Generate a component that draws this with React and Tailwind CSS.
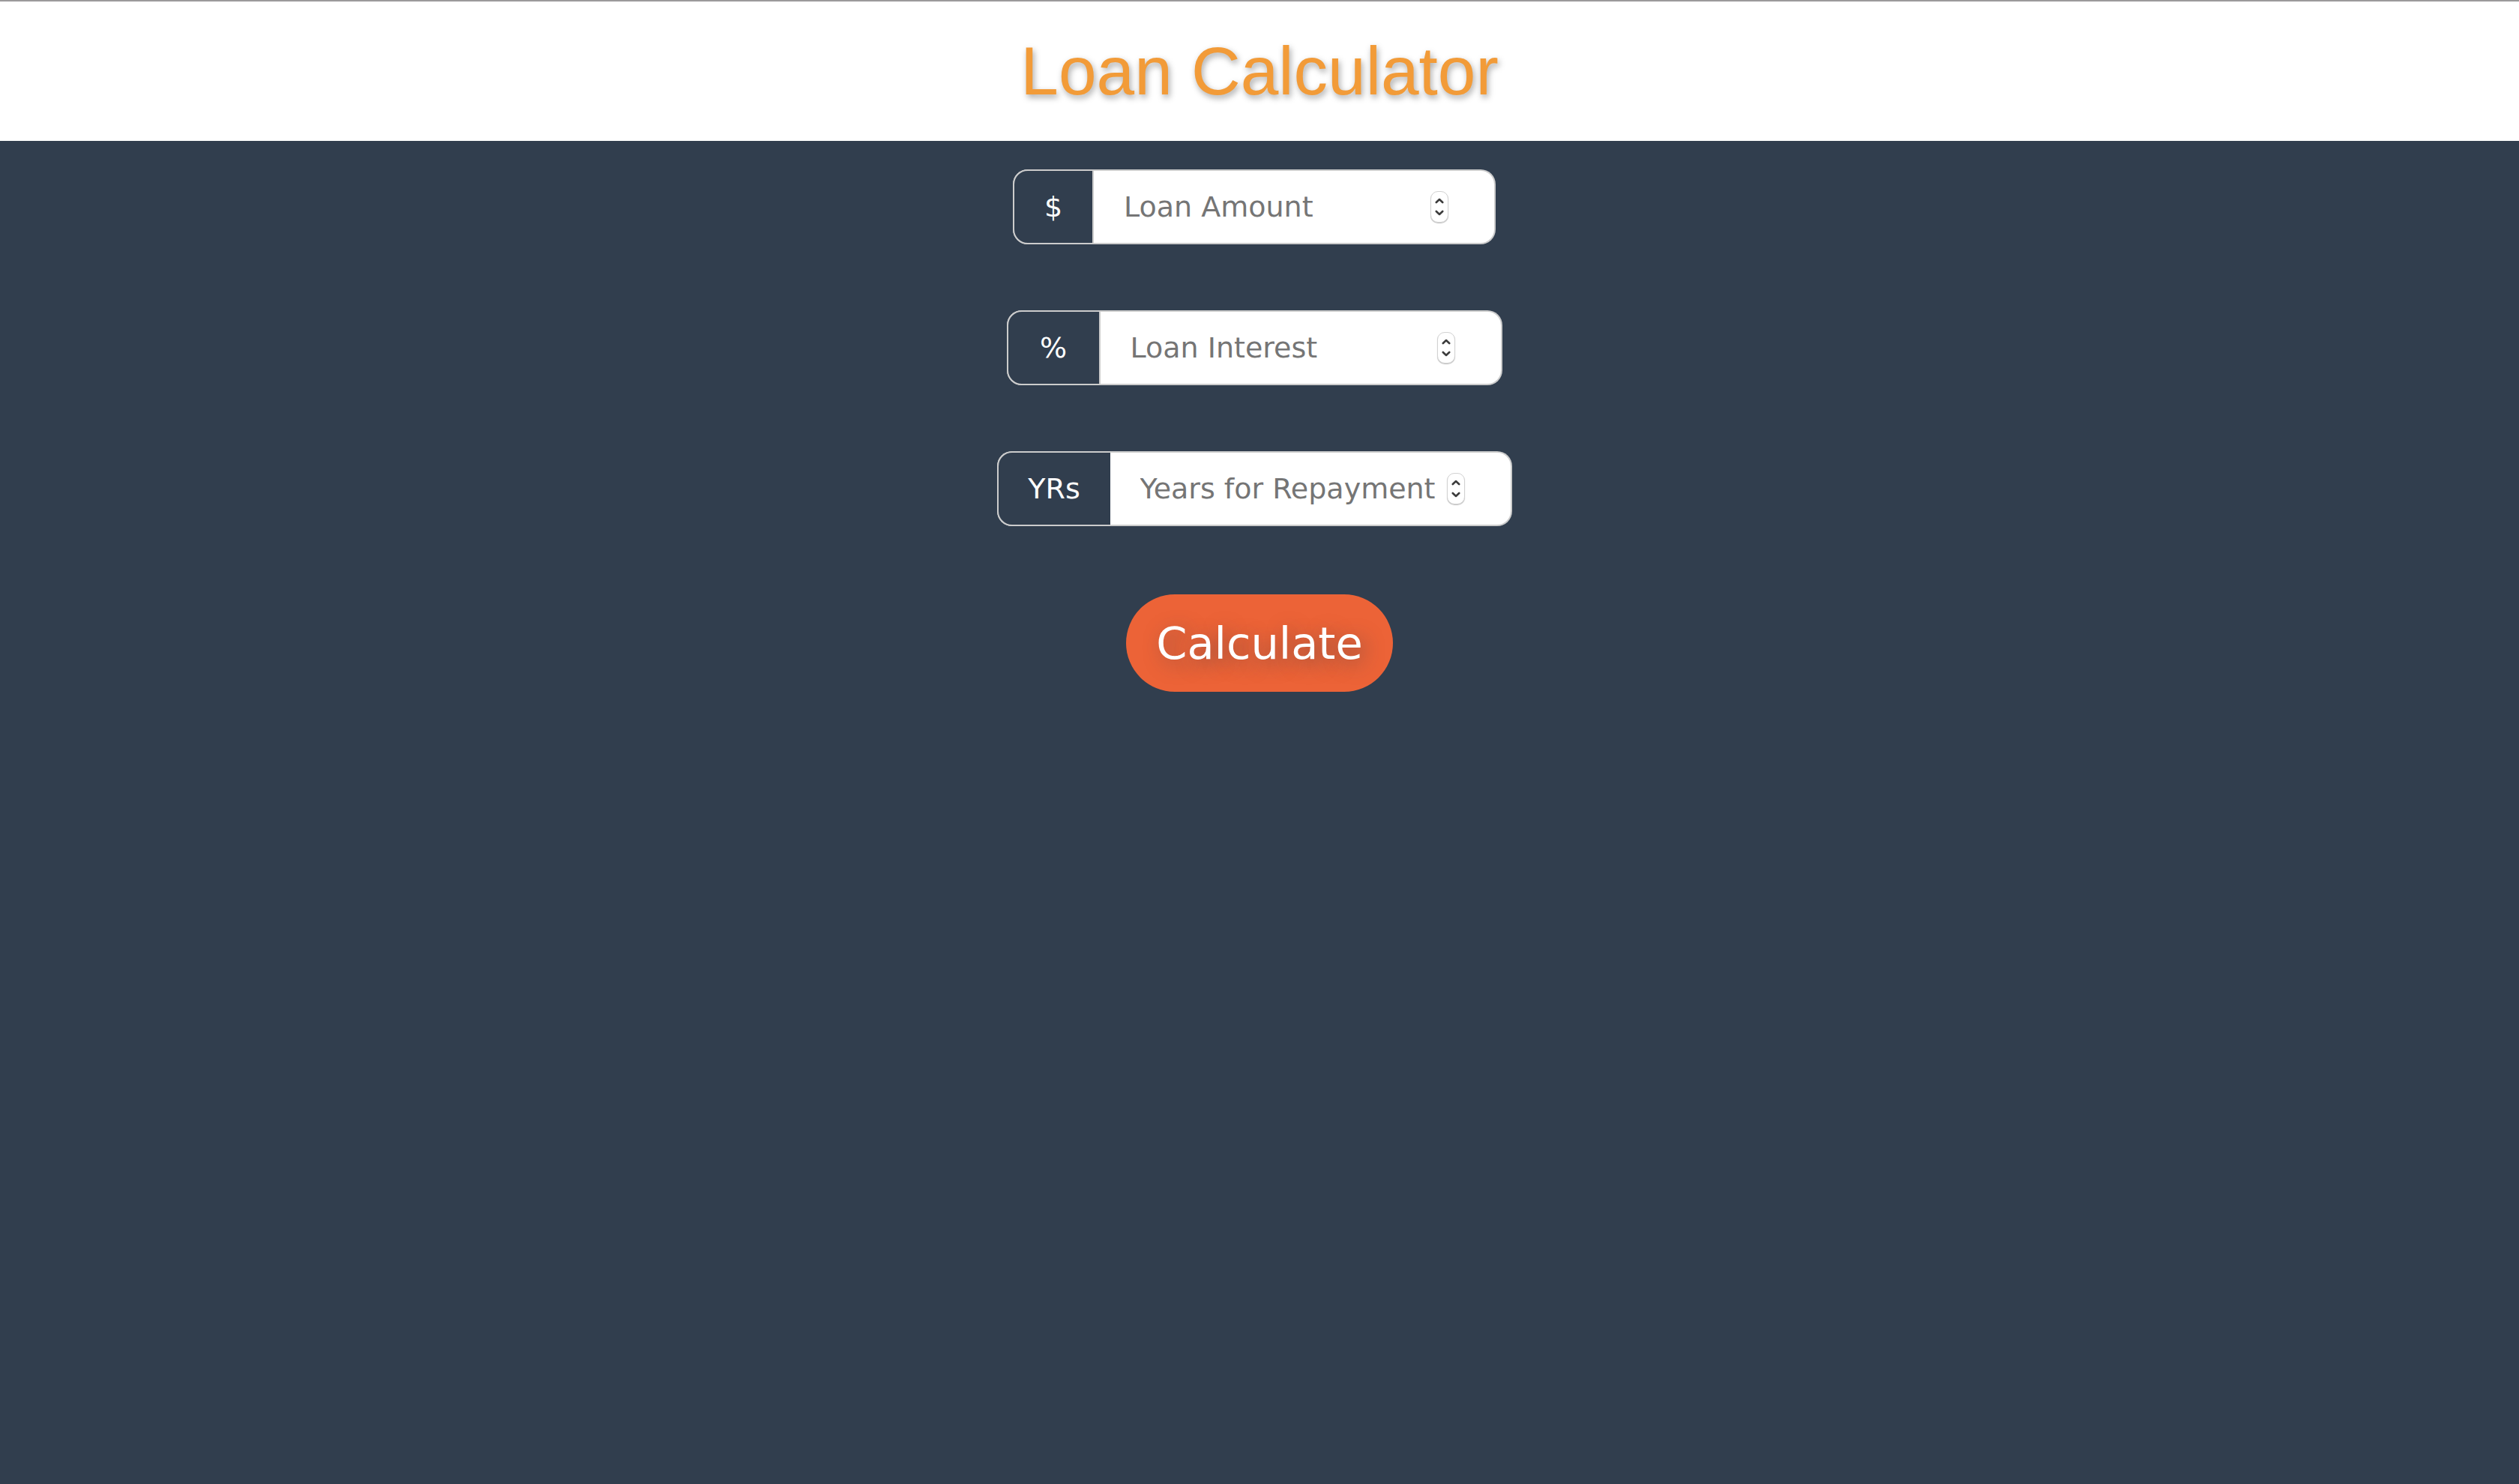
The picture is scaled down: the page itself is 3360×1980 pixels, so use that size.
import { useRef } from "react";

const fields = [
  { id: "amount", unit: "$", placeholder: "Loan Amount", unitClass: "w-[108px] border-r-2" },
  { id: "interest", unit: "%", placeholder: "Loan Interest", unitClass: "w-[125px] border-r-2" },
  { id: "years", unit: "YRs", placeholder: "Years for Repayment", unitClass: "w-[151px]" },
];

function Chevron({ d }) {
  return (
    <svg viewBox="0 0 12 8" className="h-2 w-3" fill="none" stroke="#3c3c3c" strokeWidth="2.6" strokeLinecap="round" strokeLinejoin="round" aria-hidden="true">
      <path d={d} />
    </svg>
  );
}

function Field({ id, unit, placeholder, unitClass }) {
  const input = useRef(null);
  return (
    <div className="flex h-[100px] rounded-[20px] bg-[#cccccc] p-0.5">
      <label
        htmlFor={id}
        className={`-my-0.5 -ml-0.5 box-border flex items-center justify-center rounded-l-[20px] border-y-2 border-l-2 border-[#cccccc] bg-[#313e4e] text-[38px] text-white ${unitClass}`}
      >
        {unit}
      </label>
      <div className="flex items-center rounded-r-[18px] bg-white pr-[61px] pl-10">
        <input
          ref={input}
          id={id}
          type="number"
          aria-label={placeholder}
          placeholder={placeholder}
          className="w-[409px] bg-transparent text-[38px] text-[#333333] outline-none [appearance:textfield] placeholder:text-[#757575]"
        />
        <div className="flex h-[42px] w-6 flex-col rounded-[10px] border border-[#d2d2d2] bg-white shadow-[0_1px_1px_rgba(0,0,0,0.25)]">
          <button type="button" aria-label={`Increase ${placeholder}`} onClick={() => input.current.stepUp()} className="flex flex-1 items-end justify-center pb-1">
            <Chevron d="M1.8 6 6 2l4.2 4" />
          </button>
          <button type="button" aria-label={`Decrease ${placeholder}`} onClick={() => input.current.stepDown()} className="flex flex-1 items-start justify-center pt-1">
            <Chevron d="M1.8 2 6 6l4.2-4" />
          </button>
        </div>
      </div>
    </div>
  );
}

export default function App() {
  return (
    <div className="min-h-screen bg-[#313e4e] font-['Verdana','DejaVu_Sans',sans-serif]">
      <header className="border-t-2 border-[#9c9a9b] bg-white py-[42px]">
        <h1 className="text-center font-['Liberation_Sans',Arial,sans-serif] text-[91px] leading-[102px] text-[#f29b38] [text-shadow:2px_4px_8px_rgba(0,0,0,0.35)]">
          Loan Calculator
        </h1>
      </header>
      <form className="flex flex-col items-center pt-[38px]" onSubmit={(e) => e.preventDefault()}>
        <div className="flex flex-col items-center gap-[88px] pr-3.5">
          {fields.map((field) => (
            <Field key={field.id} {...field} />
          ))}
        </div>
        <button
          type="submit"
          className="mt-[91px] h-[130px] rounded-full bg-[#ec6337] px-10 pt-0.5 text-[59px] text-white [text-shadow:6px_6px_24px_rgba(49,62,78,0.5)]"
        >
          Calculate
        </button>
      </form>
    </div>
  );
}
